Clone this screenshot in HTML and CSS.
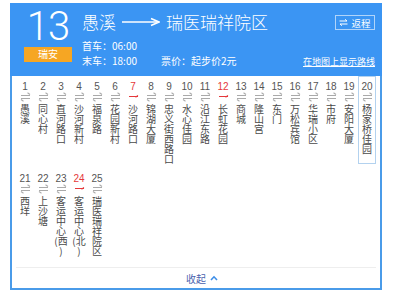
FILE: index.html
```html
<!DOCTYPE html>
<html lang="zh-CN">
<head>
<meta charset="utf-8">
<link rel="stylesheet" href="styles.css">
</head>
<body>
<div class="card">
  <div class="head">
    <div class="line-id">
      <div class="num">13</div>
      <div class="city">瑞安</div>
    </div>
    <div class="info">
      <div class="title"><span>愚溪</span><svg class="long-arrow" width="38" height="10" viewBox="0 0 38 10"><line x1="0" y1="5" x2="35" y2="5" stroke="#fff" stroke-width="1.6"/><path d="M29 1.5 L37 5 L29 8.5" fill="none" stroke="#fff" stroke-width="1.6"/></svg><span>瑞医瑞祥院区</span></div>
      <div class="times">
        <div class="trow"><span>首车：06:00</span></div>
        <div class="trow"><span>末车：18:00</span><span class="fare">票价：起步价2元</span></div>
      </div>
    </div>
    <div class="actions">
      <span class="back"><svg width="9" height="7" viewBox="0 0 9 7"><path d="M0.5 2 H8 M6 0.3 L8 2 M8.5 5 H1 M3 6.7 L1 5" stroke="#fff" stroke-width="1" fill="none"/></svg>返程</span>
      <span class="map">在地图上显示路线</span>
    </div>
  </div>
  <div class="body">
    <ol class="stops">
      <li><b>1</b><i class="ar"></i><span>愚溪</span></li>
      <li><b>2</b><i class="ar"></i><span>同心村</span></li>
      <li><b>3</b><i class="ar"></i><span>直河路口</span></li>
      <li><b>4</b><i class="ar"></i><span>沙河新村</span></li>
      <li><b>5</b><i class="ar"></i><span>福泉路</span></li>
      <li><b>6</b><i class="ar"></i><span>花园新村</span></li>
      <li class="one"><b>7</b><i class="ar"></i><span>沙河路口</span></li>
      <li><b>8</b><i class="ar"></i><span>锦湖大厦</span></li>
      <li><b>9</b><i class="ar"></i><span>忠义街西路口</span></li>
      <li><b>10</b><i class="ar"></i><span>水心佳园</span></li>
      <li><b>11</b><i class="ar"></i><span>沿江东路</span></li>
      <li class="one"><b>12</b><i class="ar"></i><span>长虹花园</span></li>
      <li><b>13</b><i class="ar"></i><span>商城</span></li>
      <li><b>14</b><i class="ar"></i><span>隆山宫</span></li>
      <li><b>15</b><i class="ar"></i><span>东门</span></li>
      <li><b>16</b><i class="ar"></i><span>万松宾馆</span></li>
      <li><b>17</b><i class="ar"></i><span>华瑞小区</span></li>
      <li><b>18</b><i class="ar"></i><span>市府</span></li>
      <li><b>19</b><i class="ar"></i><span>安阳大厦</span></li>
      <li class="cur"><b>20</b><i class="ar"></i><span>杨家桥佳园</span></li>
      <li><b>21</b><i class="ar"></i><span>西垟</span></li>
      <li><b>22</b><i class="ar"></i><span>上沙塘</span></li>
      <li><b>23</b><i class="ar"></i><span>客运中心(西)</span></li>
      <li class="one"><b>24</b><i class="ar"></i><span>客运中心(北)</span></li>
      <li><b>25</b><i class="ar"></i><span>瑞医瑞祥院区</span></li>
    </ol>
    <div class="foot"><span>收起</span><svg width="8" height="6" viewBox="0 0 8 6"><path d="M1 5 L4 1.8 L7 5" fill="none" stroke="#3d8ee8" stroke-width="1.6"/></svg></div>
  </div>
</div>
</body>
</html>
```
FILE: styles.css
```css
* { box-sizing: border-box; }
html, body { margin: 0; padding: 0; background: #fff; }
body {
  font-family: "Liberation Sans", "Noto Sans CJK SC", sans-serif;
  color: #444;
}
.card {
  width: 372px;
  margin: 3px 0 0 10px;
}
.head {
  height: 73px;
  background: #3b95f3;
  color: #fff;
  display: flex;
}
.line-id {
  width: 48px;
  margin-left: 14px;
  padding-top: 6px;
  display: flex;
  flex-direction: column;
  align-items: center;
}
.num {
  font-family: Roboto, "Liberation Sans", sans-serif;
  font-weight: 300;
  font-size: 40px;
  line-height: 36px;
  letter-spacing: -1px;
}
.city {
  margin-top: 2px;
  width: 48px;
  height: 15px;
  line-height: 15px;
  background: #f6a623;
  text-align: center;
  font-size: 10px;
  color: #fff;
}
.info {
  flex: 1;
  margin-left: 10px;
  padding-top: 9px;
}
.title {
  display: flex;
  align-items: center;
  font-size: 17px;
  font-weight: 300;
  line-height: 20px;
  height: 20px;
  font-family: "Noto Sans CJK SC", sans-serif;
}
.long-arrow { margin: 0 6px 0 6px; }
.times {
  margin-top: 6px;
  font-size: 10px;
  font-family: "Noto Sans CJK SC", sans-serif;
}
.trow {
  display: flex;
  height: 15px;
  line-height: 15px;
}
.fare { margin-left: 24px; }
.actions {
  display: flex;
  flex-direction: column;
  align-items: flex-end;
  justify-content: space-between;
  padding: 12px 7px 7px 0;
  font-family: "Noto Sans CJK SC", sans-serif;
  font-size: 10px;
}
.back {
  display: flex;
  align-items: center;
  justify-content: center;
  gap: 3px;
  width: 40px;
  height: 15px;
  border: 1px solid rgba(255,255,255,0.6);
  font-size: 9.5px;
}
.map {
  text-decoration: underline;
  line-height: 14px;
  font-size: 9px;
}
.body {
  border: 2px solid #4a9be9;
  border-top: 0;
  height: 214px;
  display: flex;
  flex-direction: column;
}
.stops {
  list-style: none;
  margin: 0;
  padding: 0 0 0 4px;
  display: flex;
  flex-wrap: wrap;
  width: 364px;
  row-gap: 4px;
  flex: 1;
  align-content: flex-start;
}
.stops li {
  width: 18px;
  padding-top: 5px;
  display: flex;
  flex-direction: column;
  align-items: center;
  text-align: center;
}
.stops li.cur { border: 1px solid #b3d2ef; padding-top: 4px; }
.stops b {
  font-weight: normal;
  font-size: 10px;
  line-height: 12px;
  color: #555;
}
.stops .ar {
  display: block;
  width: 9px;
  height: 8px;
  background:
    linear-gradient(#aaa, #aaa) 0 2px / 9px 1px no-repeat,
    linear-gradient(#aaa, #aaa) 0 5px / 9px 1px no-repeat;
  position: relative;
}
.stops .ar::before, .stops .ar::after {
  content: "";
  position: absolute;
  width: 3px;
  height: 1px;
  background: #aaa;
}
.stops .ar::before { right: 0; top: 1px; transform: rotate(35deg); transform-origin: right center; }
.stops .ar::after { left: 0; top: 6px; transform: rotate(35deg); transform-origin: left center; }
.stops li.one b { color: #e5383b; }
.stops li.one .ar {
  background: linear-gradient(#e5383b, #e5383b) 0 3px / 9px 1px no-repeat;
}
.stops li.one .ar::before { background: #e5383b; top: 2px; right: 0; transform: rotate(-35deg); transform-origin: right center; }
.stops li.one .ar::after { display: none; }
.stops span {
  margin-top: 3px;
  width: 15px;
  font-family: "Noto Sans CJK SC", sans-serif;
  font-size: 10px;
  line-height: 10px;
  color: #4a4a4a;
  overflow-wrap: anywhere;
}
.foot {
  margin: 0 4px;
  height: 21px;
  border-top: 1px solid #eee;
  display: flex;
  align-items: center;
  justify-content: center;
  gap: 4px;
  font-family: "Noto Sans CJK SC", sans-serif;
  font-size: 10px;
  color: #4a5fae;
  padding-left: 12px;
}
```
